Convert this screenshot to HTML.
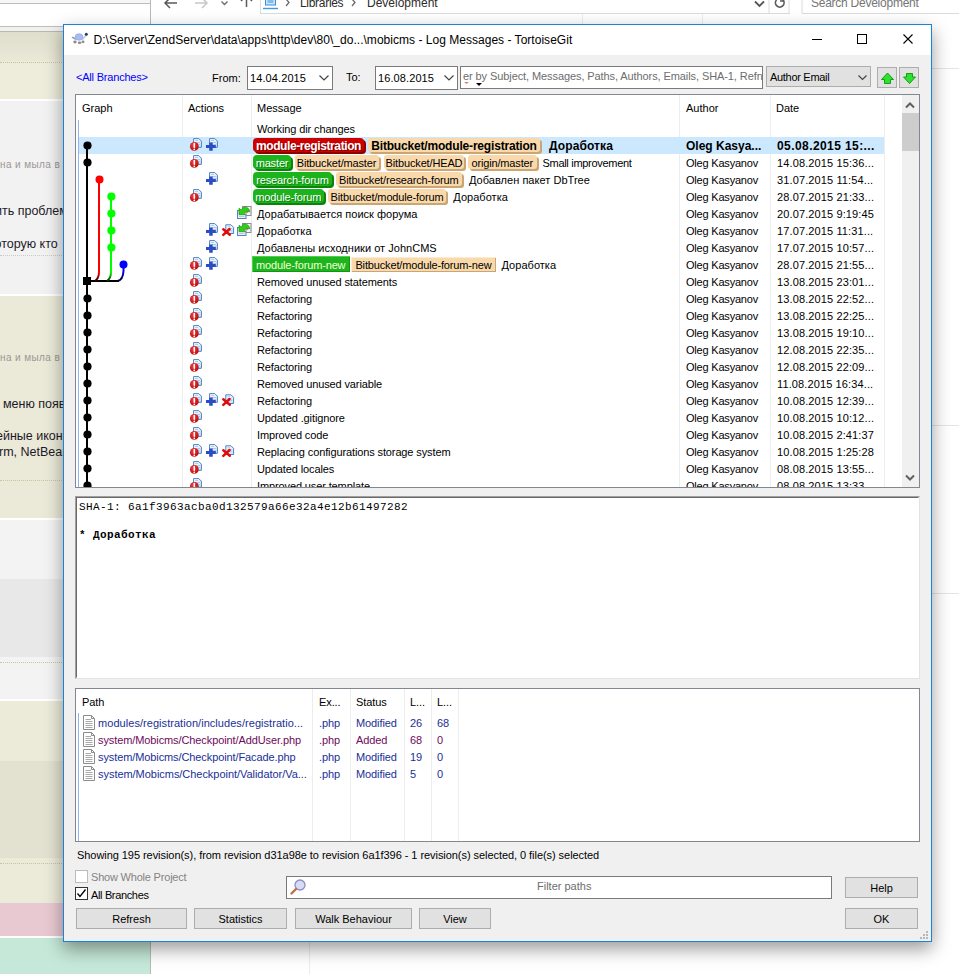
<!DOCTYPE html>
<html lang="ru"><head><meta charset="utf-8"><title>Log Messages - TortoiseGit</title>
<style>
html,body{margin:0;padding:0}
body{width:959px;height:974px;overflow:hidden;background:#fff;position:relative;font-family:"Liberation Sans",sans-serif;font-size:11px;color:#000}
div,span,svg{position:absolute;box-sizing:border-box}
.t{white-space:nowrap;line-height:14px;height:14px}
/* background page (left) */
#lbg{left:0;top:0;width:150px;height:974px;overflow:hidden;background:#f3f3f3}
#lbg .b{left:0;width:150px}
#lbg .dot{left:0;width:150px;height:0;border-top:1px dotted #c9c3a0}
#lbg .big{font-size:12.500px;color:#1c1a28;white-space:nowrap;line-height:18px;height:18px}
#lbg .sm{font-size:10px;color:#9c9894;white-space:nowrap;line-height:12px;height:12px;letter-spacing:.4px}
/* explorer behind */
#exp{left:150px;top:0;width:809px;height:974px;background:#fff;border-left:1px solid #b9b9b9;overflow:hidden}
#exp .hl{height:1px;background:#e5e5e5}
#exp .vl2{width:1px;background:#ececec}
#exp .et{font-size:12px;color:#2b2b2b;white-space:nowrap;line-height:14px;height:14px}
/* dialog */
#win{left:0;top:0;width:959px;height:974px}
.frame{left:63px;top:24px;width:869px;height:918px;background:#f0f0f0;border:1px solid #1883d7;box-shadow:0 7px 17px 0 rgba(0,0,0,.4)}
.title{left:64px;top:25px;width:867px;height:30px;background:#fff}
.title .tt{left:29.500px;top:8px;font-size:12px;line-height:14px;white-space:nowrap;letter-spacing:.024px}
.lbl{white-space:nowrap;line-height:14px;height:14px}
.edit{background:#fff;border:1px solid #7a7a7a;height:24px;top:66px;overflow:hidden}
.edit .v{left:3px;top:4px;white-space:nowrap;line-height:14px}
.btn{background:#e1e1e1;border:1px solid #adadad;text-align:center;line-height:20px;white-space:nowrap}
/* log list */
#log{left:75px;top:94px;width:845px;height:394px;border:1px solid #828790;background:#fff}
#loginner{left:0;top:0;width:843px;height:392px;overflow:hidden}
.hdr{left:0;top:0;width:825px;height:24px}
.hdr span{top:6px;line-height:14px;white-space:nowrap}
.vl{top:0;width:1px;height:392px;background:#ededed}
.row{left:0;width:808px;height:17px}
.row.sel{background:#cce8ff}
.row .msg{left:176px;top:0;padding-top:1px;width:427px;height:18px;overflow:hidden;white-space:nowrap}
.row .mt{position:relative;display:inline-block;line-height:17px;height:17px;margin-left:5px;vertical-align:top;letter-spacing:-0.12px}
.row .mt.cy{letter-spacing:.03px}.row .mt.sm{letter-spacing:-0.3px}
.row .au{left:610px;top:1px;line-height:17px;white-space:nowrap;letter-spacing:-0.2px}
.row .dt{left:701px;top:1px;line-height:17px;white-space:nowrap;letter-spacing:.12px}
.row.sel .mt,.row.sel .au,.row.sel .dt{font-weight:bold;font-size:12px;letter-spacing:.1px}.row.sel .au{letter-spacing:0}.row.sel .dt{letter-spacing:.42px}
.ic{top:0;overflow:visible}
.tag{position:relative;display:inline-block;vertical-align:top;height:14px;line-height:17px;margin-top:0;padding:0;text-align:center;white-space:nowrap;letter-spacing:-0.15px}
.tag.g{background:#1cb41c;color:#fff;border-radius:4px;box-shadow:2px 2px 0 #0c840c;text-shadow:1px 1px 0 rgba(0,80,0,.55)}
.tag.q{background:#1db51d;color:#f4ffd8;margin-top:-1px;height:16px;line-height:19px;box-shadow:inset 1px 1px 0 #4fd04f,inset -1px -1px 0 #149414}
.tag.r{background:#cc0000;color:#fff;border-radius:4px;box-shadow:2px 2px 0 #8e0000;text-shadow:1px 1px 0 rgba(80,0,0,.6);font-weight:bold;font-size:12px;letter-spacing:-0.4px}
.tag.t,.tag.tb{background:#f9d9ab;color:#000;border-radius:3px;box-shadow:2px 2px 0 #c9a674}.tag.ts{background:#f9d9ab;color:#000;height:15px;box-shadow:inset 1px 1px 0 #fdebd0,inset -1px -1px 0 #c9a674}
.tag.tb{font-weight:bold;font-size:12px;letter-spacing:-0.18px}
.graph{left:0;top:0}
.focusline{left:2px;width:1px;background:#8fb4ee}
.sb{left:826px;top:0;width:17px;height:392px;background:#f0f0f0}
/* message box */
#msg{left:75px;top:496px;width:845px;height:183px;background:#fff;border:1px solid;border-color:#a0a0a0 #e3e3e3 #e3e3e3 #a0a0a0}
#msg .in{left:0;top:0;width:843px;height:181px;border:1px solid;border-color:#696969 #fff #fff #696969}
#msg .ln{left:2px;margin-top:-1px;font-family:"Liberation Mono",monospace;font-size:11px;letter-spacing:.4px;line-height:14px;white-space:pre}
/* file list */
#files{left:75px;top:688px;width:845px;height:154px;border:1px solid #828790;background:#fff}
#files .fr{left:0;width:400px;height:17px}
#files span{line-height:17px;white-space:nowrap;letter-spacing:-0.1px}
.cb{width:13px;height:13px;left:75px;background:#fff;border:1px solid #333}

</style></head><body>
<svg width="0" height="0" style="left:0;top:0"><defs>
<linearGradient id="pgf" x1="0" y1="0" x2="1" y2="1"><stop offset="0" stop-color="#fff"/><stop offset="1" stop-color="#cfe2f8"/></linearGradient>
<radialGradient id="rdg" cx=".4" cy=".35" r=".7"><stop offset="0" stop-color="#f04040"/><stop offset="1" stop-color="#b80808"/></radialGradient>
<g id="pg"><path d="M3.600 1.600 H8.800 L11.400 4.200 V10.300 H3.600 Z" fill="url(#pgf)" stroke="#4a80c0" stroke-width="1"/><path d="M5.200 3.500 H8 M5.200 5.500 H10 M5.200 7.500 H10" stroke="#a9c6ec" stroke-width=".9"/></g>
<g id="iM"><use href="#pg"/><circle cx="4.300" cy="9.400" r="4.400" fill="url(#rdg)"/><path d="M4.300 6.500 V10.300" stroke="#fff" stroke-width="1.600" stroke-linecap="round"/><circle cx="4.300" cy="12.300" r=".85" fill="#fff"/></g>
<g id="iA"><use href="#pg"/><path d="M3.200 5.400 H6.700 V8 H9.800 V11 H6.700 V13.700 H3.200 V11 H0 V8 H3.200 Z" fill="#2a4cc4"/></g>
<g id="iD"><g transform="translate(.2,1.200)"><use href="#pg"/></g><path d="M1.300 7.300 L7.800 12.800 M1.300 12.800 L7.600 7" stroke="#e00c0c" stroke-width="2.500" stroke-linecap="round"/></g>
<g id="iR"><rect x="4.500" y="1.500" width="8.500" height="9" fill="#f4f7fb" stroke="#8a8a8a"/><rect x="-.5" y="5.500" width="8.500" height="8" fill="#e8f0fb" stroke="#5f7fb8"/><path d="M1 11.500 H6.500" stroke="#a9c6ec" stroke-width=".9"/><circle cx="9.300" cy="7" r="1.100" fill="#f07050"/><path d="M1 3.300 L1 9.700 L7.500 9.700 L5.700 7.900 Q8.500 5.300 11.800 6.800 Q11.200 2.300 6.500 2 Q4.500 2.600 3.300 5 Z" fill="#2fd018" stroke="#179a08" stroke-width=".7" stroke-linejoin="round"/></g>
<g id="fi"><path d="M.5 .5 H8.500 L11.500 3.500 V14.500 H.5 Z" fill="#fff" stroke="#8c8c8c"/><path d="M8.500 .5 V3.500 H11.500" fill="none" stroke="#8c8c8c"/><path d="M2.500 4.500 H8 M2.500 6.500 H9.500 M2.500 8.500 H9.500 M2.500 10.500 H9.500 M2.500 12.500 H9.500" stroke="#a8a8a8"/></g>
</defs></svg>

<div id="exp">
<div class="hl" style="left:109px;top:13px;width:530px;background:#dcdcdc"></div><div class="hl" style="left:651px;top:13px;width:160px;background:#dcdcdc"></div>
<div class="hl" style="left:781px;top:68px;width:30px"></div>
<div class="hl" style="left:781px;top:425px;width:30px"></div>
<div class="hl" style="left:781px;top:593px;width:30px"></div>
<div class="vl2" style="left:158px;top:941px;height:40px"></div>
<div class="vl2" style="left:431px;top:14px;height:11px"></div>
<div class="vl2" style="left:551px;top:14px;height:11px"></div>
<svg style="left:0;top:0" width="809" height="14">
<path d="M26 3 H14.500 M19 -2 L14 3 L19 8" stroke="#5a5a5a" stroke-width="1.500" fill="none"/>
<path d="M44 3 H55.500 M51 -2 L56 3 L51 8" stroke="#c8c8c8" stroke-width="1.500" fill="none"/>
<path d="M70.500 1.500 L73.500 4.500 L76.500 1.500" stroke="#6a6a6a" stroke-width="1.300" fill="none"/>
<path d="M95.500 -4 V7 M90 1 L95.500 -4.500 L101 1" stroke="#5a5a5a" stroke-width="1.500" fill="none"/>
<path d="M109.500 -1 V13" stroke="#dcdcdc"/>
<rect x="114.500" y="-3" width="10" height="8" fill="#cfe6fa" stroke="#3f8ad8"/><rect x="116.500" y="-1" width="6" height="4" fill="#7cc0f0"/><path d="M112 8.500 H127" stroke="#3f9ae0" stroke-width="1.400"/>
<path d="M135 -1 L138 2.500 L135 6" stroke="#6a6a6a" stroke-width="1.300" fill="none"/>
<path d="M201 -1 L204 2.500 L201 6" stroke="#6a6a6a" stroke-width="1.300" fill="none"/>
<path d="M604 1.500 L608.500 6 L613 1.500" stroke="#555" stroke-width="1.800" fill="none"/>
<path d="M618 -1 V13 M638 -1 V13 M651 -1 V13" stroke="#dcdcdc"/>
<path d="M625.500 0 A4.300 4.300 0 1 0 632 0" stroke="#5a5a5a" stroke-width="1.600" fill="none"/><path d="M632.500 -3 V1 H629" stroke="#5a5a5a" stroke-width="1.400" fill="none"/>
<path d="M299 23.500 L302 20.500 L305 23.500 Z" fill="#7a7a7a"/>
</svg>
<div class="et" style="left:149px;top:-4px;letter-spacing:-0.3px">Libraries</div>
<div class="et" style="left:216px;top:-4px">Development</div>
<div class="et" style="left:660px;top:-4px;color:#767676;letter-spacing:-0.25px">Search Development</div>
</div>
<div id="lbg">
<div class="b" style="top:0;height:3px;background:#f6f6f6"></div>
<div class="b" style="top:3px;height:1px;background:#bdbdbd"></div>
<div class="b" style="top:4px;height:22px;background:#fff"></div>
<div class="b" style="top:26px;height:1px;background:#bdbdbd"></div>
<div class="b" style="top:27px;height:4px;background:#f0f0f0"></div>
<div class="b" style="top:31px;height:1px;background:#b9b8ad"></div>
<div class="b" style="top:32px;height:67px;background:linear-gradient(#dfddcb,#e9e7d6 40%,#eeecdb 48%,#eeecdb)"></div>
<div class="dot" style="top:62px"></div>
<div class="b" style="top:99px;height:2px;background:#fff"></div>
<div class="b" style="top:101px;height:194px;background:#f2f2f2"></div>
<div class="sm" style="left:-6px;top:159px">ина и мыла в</div>
<div class="big" style="left:-5px;top:202px">ить проблему</div>
<div class="big" style="left:-5.500px;top:235px">оторую кто</div>
<div class="dot" style="top:255px;border-color:#c8c8c8"></div>
<div class="b" style="top:294px;height:2px;background:#fff"></div>
<div class="b" style="top:296px;height:222px;background:#ebe9d8"></div>
<div class="sm" style="left:-6px;top:352px">ина и мыла в</div>
<div class="big" style="left:3px;top:395px">меню появилось</div>
<div class="big" style="left:-4px;top:427px">ейные иконки</div>
<div class="big" style="left:-1px;top:443px">rm, NetBeans</div>
<div class="dot" style="top:480px"></div>
<div class="b" style="top:518px;height:2px;background:#fff"></div>
<div class="b" style="top:520px;height:59px;background:#f3f3f3"></div>
<div class="b" style="top:579px;height:78px;background:#e8e8e8"></div>
<div class="b" style="top:657px;height:42px;background:#f3f3f3"></div>
<div class="dot" style="top:662px"></div>
<div class="b" style="top:699px;height:2px;background:#fff"></div>
<div class="b" style="top:701px;height:60px;background:#ecead9"></div>
<div class="b" style="top:761px;height:97px;background:#e3e1d0"></div>
<div class="b" style="top:858px;height:45px;background:#ecead9"></div>
<div class="dot" style="top:863px"></div>
<div class="b" style="top:903px;height:33px;background:#e9c9d1"></div>
<div class="b" style="top:936px;height:2px;background:#fff"></div>
<div class="b" style="top:938px;height:36px;background:#c5e8d8"></div>
</div>

<div id="win">
<div class="frame"></div>
<div class="title">
<svg style="left:7px;top:6px" width="18" height="18" viewBox="0 0 18 18"><path d="M1.500 6.300 L4.500 8" stroke="#9a9a9a" stroke-width="1.500" stroke-linecap="round"/><ellipse cx="4" cy="11" rx="1.700" ry="1.400" fill="#8c8c8c"/><ellipse cx="8.600" cy="11.800" rx="1.800" ry="1.300" fill="#8c8c8c"/><ellipse cx="12" cy="10.800" rx="1.500" ry="1.400" fill="#8c8c8c"/><path d="M14.800 4.500 L12 8" stroke="#c5cfdc" stroke-width="1.800" stroke-linecap="round"/><ellipse cx="8" cy="6" rx="4" ry="3.300" fill="#a9bbf6" stroke="#8f9fd8" stroke-width=".6"/><circle cx="15.300" cy="3.300" r="1.500" fill="#1f3a66"/></svg>
<div class="tt">D:\Server\ZendServer\data\apps\http\dev\80\_do...\mobicms - Log Messages - TortoiseGit</div>
<svg style="left:740px;top:0" width="127" height="30"><path d="M8 14.500 H18" stroke="#000"/><rect x="53.500" y="9.500" width="9" height="9" fill="none" stroke="#000"/><path d="M99.500 9.500 L108.500 18.500 M108.500 9.500 L99.500 18.500" stroke="#000" stroke-width="1.100"/></svg>
</div>
<div class="lbl" style="left:76px;top:70px;color:#0000ff;letter-spacing:-0.2px">&lt;All Branches&gt;</div>
<div class="lbl" style="left:212px;top:71px">From:</div>
<div class="edit" style="left:247px;width:86px"><span class="v" style="left:2px;letter-spacing:.1px">14.04.2015</span><svg style="left:70px;top:7px" width="12" height="8"><path d="M1.500 1.500 L6 6 L10.500 1.500" stroke="#444" stroke-width="1.200" fill="none"/></svg></div>
<div class="lbl" style="left:346px;top:70px">To:</div>
<div class="edit" style="left:375px;width:83px"><span class="v" style="left:2px;letter-spacing:.1px">16.08.2015</span><svg style="left:67px;top:7px" width="12" height="8"><path d="M1.500 1.500 L6 6 L10.500 1.500" stroke="#444" stroke-width="1.200" fill="none"/></svg></div>
<div class="edit" style="left:460px;width:303px;height:23px"><span class="v" style="color:#6d6d6d;left:2px;top:2px;letter-spacing:-0.09px">er by Subject, Messages, Paths, Authors, Emails, SHA-1, Refnames</span><svg style="left:2px;top:15px" width="30" height="6"><path d="M1 0 H6 L3.500 2 Z" fill="#d08870"/><path d="M13 1 H19 L16 4 Z" fill="#000"/></svg></div>
<div class="btn" style="left:766px;top:66px;width:105px;height:21px;text-align:left"><span class="lbl" style="left:3px;top:3px;letter-spacing:-0.3px">Author Email</span><svg style="left:90px;top:7px" width="12" height="8"><path d="M1.500 1.500 L5.500 5.500 L9.500 1.500" stroke="#444" stroke-width="1.200" fill="none"/></svg></div>
<div class="btn" style="left:877px;top:67px;width:20px;height:21px"><svg style="left:2px;top:4px" width="15" height="13"><path d="M7.500 1 L13.500 7.500 H10.500 V11.500 H4.500 V7.500 H1.500 Z" fill="#30e030" stroke="#12a012" stroke-width="1" stroke-linejoin="round"/></svg></div>
<div class="btn" style="left:899px;top:67px;width:20px;height:21px"><svg style="left:2px;top:4px" width="15" height="13"><path d="M7.500 11.500 L13.500 5 H10.500 V1.500 H4.500 V5 H1.500 Z" fill="#30e030" stroke="#12a012" stroke-width="1" stroke-linejoin="round"/></svg></div>

<div id="log"><div id="loginner">
<div class="hdr"><span style="left:6px">Graph</span><span style="left:112px">Actions</span><span style="left:181px">Message</span><span style="left:610px">Author</span><span style="left:700px">Date</span></div>
<div class="vl" style="left:106px"></div><div class="vl" style="left:175px"></div><div class="vl" style="left:603px"></div><div class="vl" style="left:694px"></div><div class="vl" style="left:808px"></div>
<div class="row" style="top:25px"><div class="msg"><span class="mt">Working dir changes</span></div></div>
<div class="row sel" style="top:42px"><svg class="ic" style="left:114px" width="16" height="16"><use href="#iM"/></svg><svg class="ic" style="left:130px" width="16" height="16"><use href="#iA"/></svg><div class="msg"><span class="tag r" style="margin-left:1px;width:111px">module-registration</span><span class="tag tb" style="margin-left:4px;width:172px">Bitbucket/module-registration</span><span class="mt cy" style="margin-left:9px">Доработка</span></div><div class="au">Oleg Kasya...</div><div class="dt">05.08.2015 15:...</div></div>
<div class="row" style="top:59px"><svg class="ic" style="left:114px" width="16" height="16"><use href="#iM"/></svg><div class="msg"><span class="tag g" style="margin-left:1px;width:38px">master</span><span class="tag t" style="margin-left:3.5px;width:84px">Bitbucket/master</span><span class="tag t" style="margin-left:5.5px;width:80px">Bitbucket/HEAD</span><span class="tag t" style="margin-left:4px;width:68.5px">origin/master</span><span class="mt sm" style="margin-left:6px">Small improvement</span></div><div class="au">Oleg Kasyanov</div><div class="dt">14.08.2015 15:36...</div></div>
<div class="row" style="top:76px"><svg class="ic" style="left:130px" width="16" height="16"><use href="#iA"/></svg><div class="msg"><span class="tag g" style="margin-left:1px;width:79px">research-forum</span><span class="tag t" style="margin-left:4px;width:125.5px">Bitbucket/research-forum</span><span class="mt cy" style="margin-left:7.5px">Добавлен пакет DbTree</span></div><div class="au">Oleg Kasyanov</div><div class="dt">31.07.2015 11:54...</div></div>
<div class="row" style="top:93px"><svg class="ic" style="left:114px" width="16" height="16"><use href="#iM"/></svg><div class="msg"><span class="tag g" style="margin-left:1px;width:70.5px">module-forum</span><span class="tag t" style="margin-left:4.5px;width:118px">Bitbucket/module-forum</span><span class="mt cy" style="margin-left:7.3px">Доработка</span></div><div class="au">Oleg Kasyanov</div><div class="dt">28.07.2015 21:33...</div></div>
<div class="row" style="top:110px"><svg class="ic" style="left:162px" width="16" height="16"><use href="#iR"/></svg><div class="msg"><span class="mt cy">Дорабатывается поиск форума</span></div><div class="au">Oleg Kasyanov</div><div class="dt">20.07.2015 9:19:45</div></div>
<div class="row" style="top:127px"><svg class="ic" style="left:130px" width="16" height="16"><use href="#iA"/></svg><svg class="ic" style="left:146px" width="16" height="16"><use href="#iD"/></svg><svg class="ic" style="left:162px" width="16" height="16"><use href="#iR"/></svg><div class="msg"><span class="mt cy">Доработка</span></div><div class="au">Oleg Kasyanov</div><div class="dt">17.07.2015 11:31...</div></div>
<div class="row" style="top:144px"><svg class="ic" style="left:130px" width="16" height="16"><use href="#iA"/></svg><div class="msg"><span class="mt cy">Добавлены исходники от JohnCMS</span></div><div class="au">Oleg Kasyanov</div><div class="dt">17.07.2015 10:57...</div></div>
<div class="row" style="top:161px"><svg class="ic" style="left:114px" width="16" height="16"><use href="#iM"/></svg><svg class="ic" style="left:130px" width="16" height="16"><use href="#iA"/></svg><div class="msg"><span class="tag q" style="margin-left:0px;width:97.5px">module-forum-new</span><span class="tag ts" style="margin-left:1.5px;width:145px">Bitbucket/module-forum-new</span><span class="mt cy" style="margin-left:5.5px">Доработка</span></div><div class="au">Oleg Kasyanov</div><div class="dt">28.07.2015 21:55...</div></div>
<div class="row" style="top:178px"><svg class="ic" style="left:114px" width="16" height="16"><use href="#iM"/></svg><div class="msg"><span class="mt">Removed unused statements</span></div><div class="au">Oleg Kasyanov</div><div class="dt">13.08.2015 23:01...</div></div>
<div class="row" style="top:195px"><svg class="ic" style="left:114px" width="16" height="16"><use href="#iM"/></svg><div class="msg"><span class="mt">Refactoring</span></div><div class="au">Oleg Kasyanov</div><div class="dt">13.08.2015 22:52...</div></div>
<div class="row" style="top:212px"><svg class="ic" style="left:114px" width="16" height="16"><use href="#iM"/></svg><div class="msg"><span class="mt">Refactoring</span></div><div class="au">Oleg Kasyanov</div><div class="dt">13.08.2015 22:25...</div></div>
<div class="row" style="top:229px"><svg class="ic" style="left:114px" width="16" height="16"><use href="#iM"/></svg><div class="msg"><span class="mt">Refactoring</span></div><div class="au">Oleg Kasyanov</div><div class="dt">13.08.2015 19:10...</div></div>
<div class="row" style="top:246px"><svg class="ic" style="left:114px" width="16" height="16"><use href="#iM"/></svg><div class="msg"><span class="mt">Refactoring</span></div><div class="au">Oleg Kasyanov</div><div class="dt">12.08.2015 22:35...</div></div>
<div class="row" style="top:263px"><svg class="ic" style="left:114px" width="16" height="16"><use href="#iM"/></svg><div class="msg"><span class="mt">Refactoring</span></div><div class="au">Oleg Kasyanov</div><div class="dt">12.08.2015 22:09...</div></div>
<div class="row" style="top:280px"><svg class="ic" style="left:114px" width="16" height="16"><use href="#iM"/></svg><div class="msg"><span class="mt">Removed unused variable</span></div><div class="au">Oleg Kasyanov</div><div class="dt">11.08.2015 16:34...</div></div>
<div class="row" style="top:297px"><svg class="ic" style="left:114px" width="16" height="16"><use href="#iM"/></svg><svg class="ic" style="left:130px" width="16" height="16"><use href="#iA"/></svg><svg class="ic" style="left:146px" width="16" height="16"><use href="#iD"/></svg><div class="msg"><span class="mt">Refactoring</span></div><div class="au">Oleg Kasyanov</div><div class="dt">10.08.2015 12:39...</div></div>
<div class="row" style="top:314px"><svg class="ic" style="left:114px" width="16" height="16"><use href="#iM"/></svg><div class="msg"><span class="mt">Updated .gitignore</span></div><div class="au">Oleg Kasyanov</div><div class="dt">10.08.2015 10:12...</div></div>
<div class="row" style="top:331px"><svg class="ic" style="left:114px" width="16" height="16"><use href="#iM"/></svg><div class="msg"><span class="mt">Improved code</span></div><div class="au">Oleg Kasyanov</div><div class="dt">10.08.2015 2:41:37</div></div>
<div class="row" style="top:348px"><svg class="ic" style="left:114px" width="16" height="16"><use href="#iM"/></svg><svg class="ic" style="left:130px" width="16" height="16"><use href="#iA"/></svg><svg class="ic" style="left:146px" width="16" height="16"><use href="#iD"/></svg><div class="msg"><span class="mt">Replacing configurations storage system</span></div><div class="au">Oleg Kasyanov</div><div class="dt">10.08.2015 1:25:28</div></div>
<div class="row" style="top:365px"><svg class="ic" style="left:114px" width="16" height="16"><use href="#iM"/></svg><div class="msg"><span class="mt">Updated locales</span></div><div class="au">Oleg Kasyanov</div><div class="dt">08.08.2015 13:55...</div></div>
<div class="row" style="top:382px"><svg class="ic" style="left:114px" width="16" height="16"><use href="#iM"/></svg><div class="msg"><span class="mt">Improved user template</span></div><div class="au">Oleg Kasyanov</div><div class="dt">08.08.2015 13:33...</div></div>
<svg class="graph" width="106" height="392" viewBox="0 0 106 392">
<defs><linearGradient id="gr" x1="0" y1="0" x2="0" y2="1"><stop offset="0" stop-color="#f00"/><stop offset="1" stop-color="#300"/></linearGradient><linearGradient id="gg" x1="0" y1="0" x2="0" y2="1"><stop offset="0" stop-color="#0f0"/><stop offset="1" stop-color="#030"/></linearGradient><linearGradient id="gb" x1="0" y1="0" x2="0" y2="1"><stop offset="0" stop-color="#00f"/><stop offset="1" stop-color="#003"/></linearGradient></defs>
<path d="M11 50.5 V392" stroke="#000" stroke-width="2" fill="none"/>
<path d="M11 186 H43" stroke="#000" stroke-width="2" fill="none"/>
<path d="M23 84.5 V177" stroke="#f00" stroke-width="2" fill="none"/>
<path d="M23 177 Q23 183 19 186" stroke="url(#gr)" stroke-width="2" fill="none"/>
<path d="M35 101.5 V177" stroke="#0f0" stroke-width="2" fill="none"/>
<path d="M35 177 Q35 183 31 186" stroke="url(#gg)" stroke-width="2" fill="none"/>
<path d="M47.5 169.5 V176" stroke="#00f" stroke-width="2" fill="none"/>
<path d="M47.5 176 Q47 185 41.5 186" stroke="url(#gb)" stroke-width="2" fill="none"/>
<circle cx="11.5" cy="50.5" r="4.1" fill="#000"/>
<circle cx="11.5" cy="67.5" r="4.1" fill="#000"/>
<circle cx="11.5" cy="203.5" r="4.1" fill="#000"/>
<circle cx="11.5" cy="220.5" r="4.1" fill="#000"/>
<circle cx="11.5" cy="237.5" r="4.1" fill="#000"/>
<circle cx="11.5" cy="254.5" r="4.1" fill="#000"/>
<circle cx="11.5" cy="271.5" r="4.1" fill="#000"/>
<circle cx="11.5" cy="288.5" r="4.1" fill="#000"/>
<circle cx="11.5" cy="305.5" r="4.1" fill="#000"/>
<circle cx="11.5" cy="322.5" r="4.1" fill="#000"/>
<circle cx="11.5" cy="339.5" r="4.1" fill="#000"/>
<circle cx="11.5" cy="356.5" r="4.1" fill="#000"/>
<circle cx="11.5" cy="373.5" r="4.1" fill="#000"/>
<circle cx="11.5" cy="390.5" r="4.1" fill="#000"/>
<circle cx="11.5" cy="407.5" r="4.1" fill="#000"/>
<rect x="7" y="182" width="8" height="8" fill="#000"/>
<circle cx="23.5" cy="84.5" r="4" fill="#f00"/>
<circle cx="35.4" cy="101.5" r="4.1" fill="#0f0"/>
<circle cx="35.4" cy="118.5" r="4.1" fill="#0f0"/>
<circle cx="35.4" cy="135.5" r="4.1" fill="#0f0"/>
<circle cx="35.4" cy="152.5" r="4.1" fill="#0f0"/>
<circle cx="47.5" cy="169.5" r="4" fill="#00f"/>
</svg>
<div class="focusline" style="top:25px;height:367px;left:0;width:2px;background:#fff"></div><div class="focusline" style="top:25px;height:367px"></div>
<div class="sb"><svg width="17" height="392"><path d="M4 12.5 L8 8.5 L12 12.5" stroke="#606060" stroke-width="2" fill="none"/><rect x="0" y="18" width="17" height="38" fill="#cdcdcd"/><path d="M4 380.500 L8 384.500 L12 380.500" stroke="#606060" stroke-width="2" fill="none"/></svg></div>
</div></div>
<div id="msg"><div class="in">
<div class="ln" style="top:3px">SHA-1: 6a1f3963acba0d132579a66e32a4e12b61497282</div>
<div class="ln" style="top:31px;font-weight:bold">* Доработка</div>
</div></div>
<div id="files">
<div class="vl" style="left:236px;height:152px"></div><div class="vl" style="left:274px;height:152px"></div><div class="vl" style="left:328px;height:152px"></div><div class="vl" style="left:355px;height:152px"></div><div class="vl" style="left:382px;height:152px"></div>
<div class="focusline" style="top:24px;height:128px"></div>
<span style="left:6px;top:5px">Path</span><span style="left:243px;top:5px">Ex...</span><span style="left:280px;top:5px">Status</span><span style="left:334px;top:5px">L...</span><span style="left:361px;top:5px">L...</span>
<div class="fr" style="top:26px;color:#1a2f96"><svg style="left:7px;top:0" width="13" height="16"><use href="#fi"/></svg><span style="left:22px;letter-spacing:.05px">modules/registration/includes/registratio...</span><span style="left:243px">.php</span><span style="left:280px">Modified</span><span style="left:334px">26</span><span style="left:361px">68</span></div>
<div class="fr" style="top:43px;color:#6e0a5a"><svg style="left:7px;top:0" width="13" height="16"><use href="#fi"/></svg><span style="left:22px">system/Mobicms/Checkpoint/AddUser.php</span><span style="left:243px">.php</span><span style="left:280px">Added</span><span style="left:334px">68</span><span style="left:361px">0</span></div>
<div class="fr" style="top:60px;color:#1a2f96"><svg style="left:7px;top:0" width="13" height="16"><use href="#fi"/></svg><span style="left:22px">system/Mobicms/Checkpoint/Facade.php</span><span style="left:243px">.php</span><span style="left:280px">Modified</span><span style="left:334px">19</span><span style="left:361px">0</span></div>
<div class="fr" style="top:77px;color:#1a2f96"><svg style="left:7px;top:0" width="13" height="16"><use href="#fi"/></svg><span style="left:22px;letter-spacing:-0.04px">system/Mobicms/Checkpoint/Validator/Va...</span><span style="left:243px">.php</span><span style="left:280px">Modified</span><span style="left:334px">5</span><span style="left:361px">0</span></div>
</div>
<div class="lbl" style="left:77px;top:848px;letter-spacing:-0.055px">Showing 195 revision(s), from revision d31a98e to revision 6a1f396 - 1 revision(s) selected, 0 file(s) selected</div>
<div class="cb" style="top:870px;border-color:#bcbcbc"></div>
<div class="lbl" style="left:91px;top:870px;color:#838383;letter-spacing:-0.2px">Show Whole Project</div>
<div class="cb" style="top:887px"><svg style="left:0;top:0" width="11" height="11"><path d="M1.500 5.500 L4 8.500 L9.500 1.500" stroke="#000" stroke-width="1.300" fill="none"/></svg></div>
<div class="lbl" style="left:91px;top:888px;letter-spacing:-0.35px">All Branches</div>
<div class="edit" style="left:286px;top:876px;width:546px;height:23px"><svg style="left:2px;top:1px" width="18" height="18"><circle cx="11" cy="7" r="5" fill="#d6dcf6" stroke="#8a8fc0" stroke-width="1.300"/><path d="M7 11 L2.500 15.500" stroke="#c07040" stroke-width="2.400" stroke-linecap="round"/></svg><span class="v" style="left:250px;top:2px;color:#6d6d6d">Filter paths</span></div>
<div class="btn" style="left:845px;top:877px;width:73px;height:21px">Help</div>
<div class="btn" style="left:76px;top:908px;width:111px;height:21px">Refresh</div>
<div class="btn" style="left:194px;top:908px;width:93px;height:21px">Statistics</div>
<div class="btn" style="left:295px;top:908px;width:117px;height:21px">Walk Behaviour</div>
<div class="btn" style="left:419px;top:908px;width:72px;height:21px">View</div>
<div class="btn" style="left:845px;top:908px;width:73px;height:21px">OK</div>
<svg style="left:919px;top:929px" width="12" height="12"><path d="M7 2 h2 v2 h-2z M4 5 h2 v2 h-2z M7 5 h2 v2 h-2z M1 8 h2 v2 h-2z M4 8 h2 v2 h-2z M7 8 h2 v2 h-2z" fill="#b8b8b8"/></svg>

</div>
</body></html>
